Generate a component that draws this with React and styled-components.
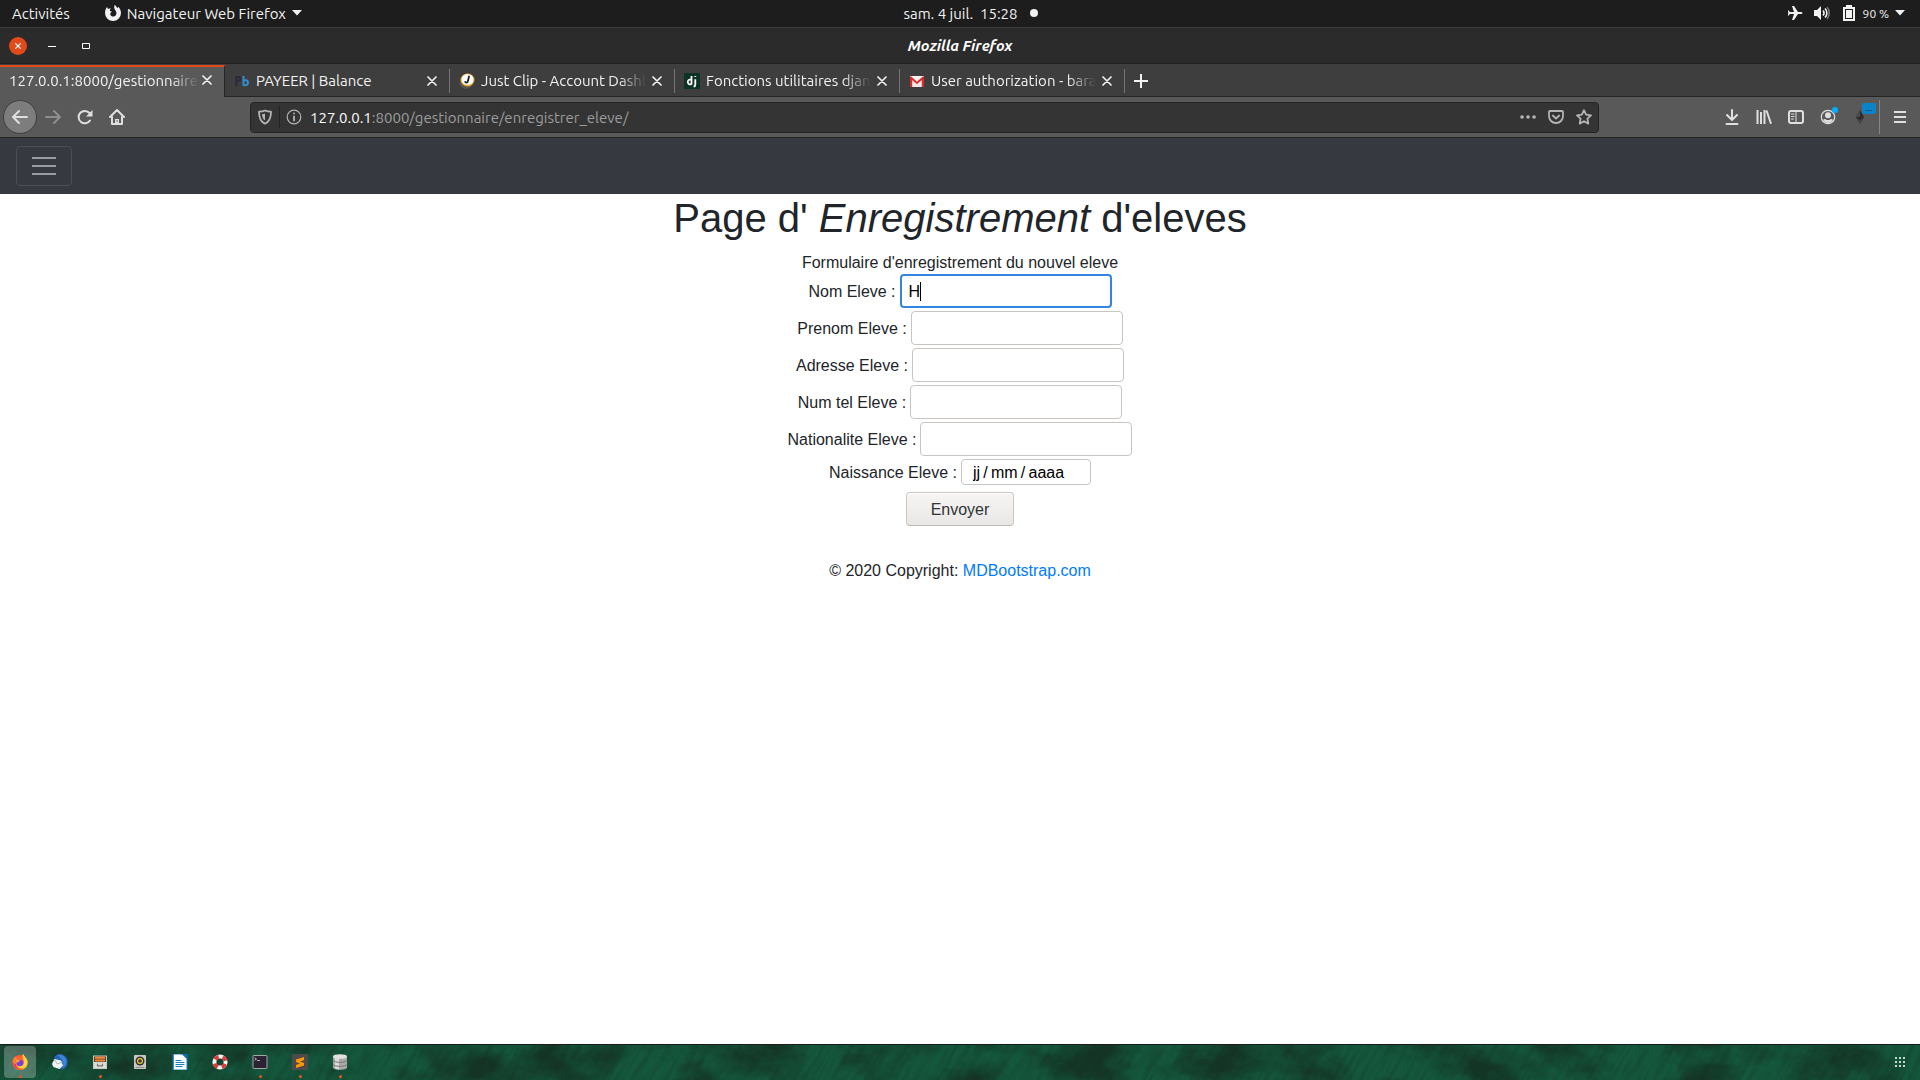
import React from "react";
import styled, { createGlobalStyle, css } from "styled-components";

const ui = `Ubuntu, "Noto Sans", "Open Sans", sans-serif`;
const sans = `"Liberation Sans", Arial, sans-serif`;

const GlobalStyle = createGlobalStyle`
  *, *::before, *::after { box-sizing: border-box; }
  body { margin: 0; background: #fff; }
  button, input { font: inherit; margin: 0; }
`;

const Desktop = styled.div`
  display: flex;
  flex-direction: column;
  height: 100vh;
  overflow: hidden;
  font-family: ${ui};
  font-size: 15px;
  color: #f2f2f2;
`;

const PlainButton = styled.button`
  display: flex;
  align-items: center;
  justify-content: center;
  gap: 6px;
  flex: none;
  padding: 0;
  border: 0;
  background: none;
  color: inherit;
  white-space: nowrap;
`;

/* ---- system bar ---- */
const SystemBar = styled.header`
  display: grid;
  grid-template-columns: 1fr auto 1fr;
  align-items: center;
  flex: none;
  height: 28px;
  padding: 0 15px 1px 12px;
  background: #1d1d1d;
  border-bottom: 1px solid #3c3c3c;
`;
const BarGroup = styled.div`
  display: flex;
  align-items: center;
  gap: ${(p) => p.$gap}px;
  justify-content: ${(p) => (p.$end ? "flex-end" : "flex-start")};
`;
const Clock = styled(BarGroup)`
  padding-left: 24px;
`;
const NotificationDot = styled.span`
  width: 8px;
  height: 8px;
  border-radius: 50%;
  background: #f2f2f2;
`;
const Battery = styled.span`
  font-size: 12px;
`;

/* ---- window title ---- */
const TitleBar = styled.div`
  display: grid;
  grid-template-columns: 1fr auto 1fr;
  align-items: center;
  flex: none;
  height: 36px;
  padding: 0 9px;
  background: #2b2b2b;
  border-bottom: 1px solid #202020;
`;
const WindowTitle = styled.h2`
  margin: 0;
  font-size: 15px;
  font-style: italic;
  font-weight: 700;
  color: #fff;
`;
const CloseWindow = styled(PlainButton)`
  width: 18px;
  height: 18px;
  border-radius: 50%;
  background: #e24a1a;
`;

/* ---- tabs ---- */
const TabStrip = styled.nav`
  display: flex;
  align-items: stretch;
  flex: none;
  height: 33px;
  background: #3e3e3e;
  box-shadow: inset 0 -1px #252525;
`;
const Tab = styled.div`
  display: flex;
  align-items: center;
  flex: 0 1 225px;
  min-width: 0;
  gap: 6px;
  padding: 0 13px 0 9px;
  position: relative;
  ${(p) =>
    p.$active
      ? css`
          gap: 3px;
          padding-right: 12px;
          padding-bottom: 4px;
          background: #595959;
          border-top: 2px solid #e24a1a;
          border-right: 1px solid #252525;
          margin-top: 1px;
        `
      : css`
          &::after {
            content: "";
            position: absolute;
            right: 0;
            top: 5px;
            width: 1px;
            height: 24px;
            background: #757575;
          }
        `}
`;
const TabTitle = styled.a`
  flex: 1;
  min-width: 0;
  overflow: hidden;
  white-space: nowrap;
  color: inherit;
  text-decoration: none;
  ${(p) => p.$fade && css`mask-image: linear-gradient(to left, transparent, #000 28px);`}
`;
const NewTab = styled(PlainButton)`
  width: 32px;
`;

/* ---- navigation toolbar ---- */
const Toolbar = styled.div`
  display: flex;
  align-items: center;
  flex: none;
  height: 41px;
  padding-left: 3px;
  background: #595959;
  border-bottom: 1px solid #252525;
  color: #dfdfdf;
`;
const ToolButton = styled(PlainButton)`
  width: 32px;
  height: 34px;
  position: relative;
  opacity: ${(p) => (p.disabled ? 0.4 : 1)};
`;
const BackButton = styled(ToolButton)`
  width: 34px;
  border: 1px solid #3f3f3f;
  border-radius: 50%;
  background: #7d7d7d;
`;
const Spacer = styled.div`
  flex: 1 1 0;
`;
const AddressBar = styled.div`
  display: flex;
  align-items: center;
  flex: 0 1 1349px;
  height: 31px;
  border: 1px solid #232323;
  border-radius: 4px;
  background: #343434;
  color: #b4b4b4;
`;
const AddressIcon = styled(PlainButton)`
  width: ${(p) => (p.$divided ? 29 : 28)}px;
  height: 22px;
  border-right: ${(p) => (p.$divided ? "1px solid #232323" : "0")};
`;
const Address = styled.a`
  flex: 1;
  padding-left: 2px;
  color: #9c9c9c;
  text-decoration: none;
`;
const Host = styled.span`
  color: #fff;
`;
const Badge = styled.span`
  position: absolute;
  left: 18px;
  top: 3px;
  width: 14px;
  height: 11px;
  border-radius: 2px;
  background: #0a84c8;
  color: #111;
  font-size: 10px;
  line-height: 9px;
`;
const MenuButton = styled(ToolButton)`
  width: 41px;
  margin-left: 3px;
  border-left: 1px solid #858585;
`;

/* ---- page ---- */
const Navbar = styled.nav`
  flex: none;
  padding: 8px 16px;
  background: #363940;
`;
const Toggler = styled(PlainButton)`
  width: 56px;
  height: 40px;
  border: 1px solid #4b4e55;
  border-radius: 4px;
  color: #9a9c9f;
`;
const Page = styled.main`
  flex: 1;
  min-height: 0;
  overflow: hidden;
  background: #fff;
  color: #212529;
  font-family: ${sans};
  font-size: 16px;
  line-height: 22px;
  text-align: center;
`;
const Heading = styled.h1`
  margin: 0 0 8px;
  font-size: 40px;
  line-height: 48px;
  font-weight: 400;
`;
const Form = styled.form`
  display: flex;
  flex-direction: column;
  align-items: center;
  gap: 3px;
`;
const Intro = styled.p`
  margin: 0;
  padding-top: 2px;
`;
const Field = styled.div`
  display: flex;
  align-items: center;
  gap: 4px;
`;
const Label = styled.label`
  padding-top: 2px;
`;
const TextBox = styled.input`
  width: 212px;
  height: 34px;
  padding: 2px 8px 0;
  border: 1px solid #c8c4c1;
  border-radius: 4px;
  outline: 0;
  background: #fff;
  color: #000;
  &::placeholder { color: #000; opacity: 1; }
  ${(p) =>
    p.$focused &&
    css`
      padding: 2px 7px 0;
      border: 2px solid #3584e4;
      caret-color: transparent;
      background: linear-gradient(#000, #000) 18px 50% / 1px 19px no-repeat #fff;
    `}
`;
const DateBox = styled(TextBox)`
  width: 130px;
  height: 26px;
  padding: 2px 11px 0;
`;
const Submit = styled.button`
  width: 108px;
  height: 34px;
  margin-top: 4px;
  padding: 2px 0 0;
  border: 1px solid #cdc7c2;
  border-bottom-color: #bfb8b1;
  border-radius: 4px;
  background: linear-gradient(#f6f5f4, #eae8e7);
  box-shadow: inset 0 1px #fff;
  color: #2e3436;
`;
const Footer = styled.footer`
  margin-top: 32px;
  padding-top: 2px;
`;
const FooterLink = styled.a`
  color: #007bff;
  text-decoration: none;
`;

/* ---- dock ---- */
const Dock = styled.footer`
  display: flex;
  align-items: stretch;
  flex: none;
  height: 36px;
  border-top: 1px solid #1c1a1c;
  position: relative;
  background: #14573d;
`;
const Texture = styled.svg`
  position: absolute;
  inset: 0;
  width: 100%;
  height: 100%;
`;
const DockItem = styled(PlainButton)`
  position: relative;
  width: 32px;
  margin: 1px 4px 2px;
  border-radius: 4px;
  background: ${(p) => (p.$active ? "rgba(255,255,255,0.25)" : "none")};
  &::after {
    content: "";
    display: ${(p) => (p.$running ? "block" : "none")};
    position: absolute;
    left: 15px;
    bottom: 0;
    width: 3px;
    height: 3px;
    border-radius: 50%;
    background: #e95420;
  }
`;

const Svg = ({ size = 16, children, ...rest }) => (
  <svg width={size} height={size} viewBox="0 0 16 16" fill="none" stroke="currentColor" strokeWidth="2" strokeLinecap="round" strokeLinejoin="round" aria-hidden="true" {...rest}>
    {children}
  </svg>
);
const Caret = () => (
  <svg width="10" height="6" viewBox="0 0 10 6" aria-hidden="true"><path d="M0 0h10L5 5.500z" fill="#f2f2f2" /></svg>
);
const Cross = () => (
  <Svg size={10} viewBox="0 0 10 10" strokeWidth="1.700"><path d="M1 1l8 8M9 1L1 9" /></Svg>
);

const favicons = {
  payeer: (
    <Svg stroke="none">
      <path d="M1.500 3h3a2.700 2.700 0 010 5.500H3.500V13h-2zM3.500 5v2h1a1 1 0 000-2z" fill="#29283d" />
      <path d="M8.500 3h2v3.500c3-1 4.500.6 4.500 3.200 0 3-3 4.200-6.500 3zM10.500 8.500v2.700c1.600.3 2.300-.3 2.300-1.500s-1-1.700-2.300-1.200z" fill="#2f8fcb" />
    </Svg>
  ),
  clip: (
    <Svg stroke="none">
      <ellipse cx="7" cy="10" rx="6.500" ry="6" fill="#555" />
      <ellipse cx="8.500" cy="7" rx="7" ry="6.500" fill="#f5a11c" />
      <ellipse cx="8.500" cy="6.500" rx="6" ry="5.500" fill="#fff" />
      <path d="M10 3.500L8.800 8.500c-.4 1.300-1.800 1.300-2.600.4" stroke="#222" strokeWidth="1.800" />
    </Svg>
  ),
  django: (
    <Svg stroke="none">
      <path d="M0 0h16v16H0z" fill="#0c3326" />
      <path d="M7.500 3v8.500M7.500 6.800C5 6 3.800 7.200 3.800 9s1.400 2.700 3.700 2.300M11.300 6.200v5.200c0 1.500-.5 2-1.700 2.300M11.300 3v1" stroke="#fff" strokeWidth="1.800" strokeLinecap="butt" />
    </Svg>
  ),
  gmail: (
    <Svg stroke="none">
      <path d="M1 3h14v11H1z" fill="#eceaea" />
      <path d="M1 3l7 7 7-7v3l-7 6-7-6z" fill="#e8ddd8" />
      <path d="M1 14V3.500h1.200L8 8.700l5.800-5.200H15V14h-2.200V7L8 11 3.200 7v7z" fill="#dc2b2b" />
      <path d="M3 3h10L8 7.600z" fill="#f6f4f4" />
    </Svg>
  ),
};

const tabs = [
  { title: "127.0.0.1:8000/gestionnaire", active: true, fade: true },
  { title: "PAYEER | Balance", icon: "payeer" },
  { title: "Just Clip - Account Dashb", icon: "clip", fade: true },
  { title: "Fonctions utilitaires djan", icon: "django", fade: true },
  { title: "User authorization - bara", icon: "gmail", fade: true },
];

const fields = [
  { id: "nom", label: "Nom Eleve :", value: "H", focused: true },
  { id: "prenom", label: "Prenom Eleve :" },
  { id: "adresse", label: "Adresse Eleve :" },
  { id: "tel", label: "Num tel Eleve :" },
  { id: "nationalite", label: "Nationalite Eleve :" },
];

const apps = [
  { name: "Firefox", active: true, running: true, art: (
    <>
      <circle cx="8" cy="8.500" r="7.500" fill="#ff5a36" />
      <path d="M1 5C0 11 3 16 8 16s8-4 7.500-9C15 4 12.500 3 11 0c-1 2-1 3-.5 4.500C8 4 5 6 3.500 2.500z" fill="#ff7b2e" />
      <path d="M11 0c-1 3 1 5 1 8 0 4-5 5-7 3 2 5 10 5 10.500-2C16 5 12.500 3 11 0z" fill="#ffd43a" />
      <path d="M1 9c1 4 4 7 8 6.500-4-.5-5-3-5-5z" fill="#f0315f" />
      <circle cx="8" cy="8.800" r="3.400" fill="#7b3fe0" />
      <path d="M3.500 5.500c2-.5 3 .8 5 1-1 1.500-2.500 1-3.500 2.500z" fill="#ffa52b" />
    </>) },
  { name: "Thunderbird", art: (
    <>
      <path d="M3 2C7-1 14 0 15.500 6S12 16 8 15 0 6 3 2z" fill="#2464b8" />
      <path d="M5 1c5-1 8 1 9 5s-1 7-4 8c3-5 1-9-5-13z" fill="#3d87d6" />
      <path d="M0 10l2.500-5L9 6.500l2 5L7.500 15l-6-2z" fill="#f0f2f4" />
      <path d="M2.500 6l3 4L10 8" stroke="#a9b4c0" strokeWidth="1" />
    </>) },
  { name: "Fichiers", running: true, art: (
    <>
      <path d="M1 1.500h14V15H1z" fill="#c9c7c3" />
      <path d="M2 2.500h12V8H2z" fill="#5c3a26" />
      <path d="M3 2.800h10v2H3zM3 5.500h10v2H3z" fill="#f08a35" />
      <path d="M2 8.500h12V14H2z" fill="#dedcd8" />
      <path d="M5.500 10v1.800h5V10" stroke="#77736f" strokeWidth="1.200" />
    </>) },
  { name: "Rhythmbox", art: (
    <>
      <rect x="2" y="1" width="12" height="14" rx="1" fill="#cac8c0" />
      <circle cx="8" cy="7" r="4.500" fill="#343434" />
      <circle cx="8" cy="7" r="2.400" stroke="#e5cb3a" strokeWidth="1.200" />
      <path d="M4 13.500h8" stroke="#8e8c86" strokeWidth="1" />
    </>) },
  { name: "LibreOffice Writer", art: (
    <>
      <path d="M1.500 0h9L15 4.500V16H1.500z" fill="#fff" stroke="#0f7fc4" strokeWidth="1" />
      <path d="M10 0h5.500v5.500z" fill="#0c6fae" />
      <path d="M4 6.500h5M4 8.500h8M4 10.500h8M4 12.500h6" stroke="#1480c4" strokeWidth="1.200" />
    </>) },
  { name: "Aide", art: (
    <>
      <circle cx="8" cy="8" r="5.600" stroke="#f4f4f4" strokeWidth="4" />
      <circle cx="8" cy="8" r="5.600" stroke="#dc3b3b" strokeWidth="4" strokeLinecap="butt" strokeDasharray="4.400 4.400" strokeDashoffset="-2.200" />
    </>) },
  { name: "Terminal", running: true, art: (
    <>
      <rect x="1" y="1.500" width="14" height="13" rx="1" fill="#2b2334" stroke="#a6a5a5" strokeWidth="1" />
      <path d="M3 4l1.500 1L3 6M5.500 6.500h2" stroke="#ddd" strokeWidth=".8" />
    </>) },
  { name: "Sublime Text", running: true, art: (
    <>
      <path d="M0 0h16v16H0z" fill="#4b4b4b" />
      <path d="M4 5.500L12 3v3L8 7.500l4 1.500v2.500L4 14v-3l4-1.500L4 8z" fill="#ff9800" />
    </>) },
  { name: "Base de données", running: true, art: (
    <>
      <path d="M1 2.500v11C1 16.500 15 16.500 15 13.500v-11z" fill="#aaa" />
      <path d="M3 3v11.500c1.500.7 3 .9 4 .9V3z" fill="#d9d9d9" />
      <ellipse cx="8" cy="2.500" rx="7" ry="2.300" fill="#e2e2e2" />
      <path d="M1 6.500c0 2.600 14 2.600 14 0M1 10.500c0 2.600 14 2.600 14 0" stroke="#777" strokeWidth="1" />
    </>) },
];

export default function App() {
  return (
    <Desktop>
      <GlobalStyle />
      <SystemBar>
        <BarGroup $gap={35}>
          <PlainButton>Activités</PlainButton>
          <PlainButton>
            <svg width="16" height="16" viewBox="0 0 16 16" aria-hidden="true">
              <path d="M9.500 0c2 1 2.300 2.500 2.500 3l1.500-1C15 3.500 16 5.500 16 8A8 8 0 010 8c0-2.500.8-4.500 2-6l1 2 3-1C5 4 4.700 5 5 6l2 .8C6 7.500 5 8 5.300 9.500 6 11.500 8 12 9.500 11.300 11.500 10.500 12 8 10.800 6 10 4.800 8.500 3 9.500 0z" fill="#f2f2f2" />
            </svg>
            Navigateur Web Firefox
            <Caret />
          </PlainButton>
        </BarGroup>
        <Clock $gap={12}>
          <PlainButton>sam. 4 juil.&nbsp; 15:28</PlainButton>
          <NotificationDot />
        </Clock>
        <BarGroup $gap={11} $end>
          <svg width="16" height="16" viewBox="0 0 16 16" aria-label="Mode avion">
            <path d="M1 5l2 2h4L5 1h2l4 6h3c2 0 2 2 0 2h-3l-4 6H5l2-6H3l-2 2V9l.5-1L1 7z" fill="#f2f2f2" />
          </svg>
          <svg width="16" height="16" viewBox="0 0 16 16" aria-label="Volume">
            <path d="M0 5h3l4-4v14l-4-4H0z" fill="#f2f2f2" />
            <path d="M9 5.500c1.300 1.500 1.300 3.500 0 5M11 3.500c2.500 2.500 2.500 6.500 0 9" fill="none" stroke="#f2f2f2" strokeWidth="1.600" />
            <path d="M13 2c3 3.500 3 8.500 0 12" fill="none" stroke="#777" strokeWidth="1.500" />
          </svg>
          <PlainButton>
            <svg width="16" height="16" viewBox="0 0 16 16" aria-hidden="true">
              <path d="M5 0h6v2h3v14H2V2h3zM4 4v10h8V4z" fill="#f2f2f2" fillRule="evenodd" />
              <path d="M5 5h6v8H5z" fill="#f2f2f2" />
            </svg>
            <Battery>90 %</Battery>
            <Caret />
          </PlainButton>
        </BarGroup>
      </SystemBar>

      <TitleBar>
        <BarGroup $gap={21}>
          <CloseWindow aria-label="Fermer">
            <Svg size={6} viewBox="0 0 6 6" strokeWidth="1.200" stroke="#fff"><path d="M.6.6l4.800 4.800M5.400.6L.6 5.400" /></Svg>
          </CloseWindow>
          <PlainButton aria-label="Réduire">
            <svg width="8" height="8" viewBox="0 0 8 8"><path d="M0 4h8v1H0z" fill="#fff" /></svg>
          </PlainButton>
          <PlainButton aria-label="Agrandir">
            <svg width="16" height="8" viewBox="0 0 16 8"><path d="M5.500 1.500h7v5h-7z" fill="none" stroke="#fff" /></svg>
          </PlainButton>
        </BarGroup>
        <WindowTitle>Mozilla Firefox</WindowTitle>
      </TitleBar>

      <TabStrip>
        {tabs.map((t) => (
          <Tab key={t.title} $active={t.active}>
            {favicons[t.icon]}
            <TabTitle href="#" $fade={t.fade}>{t.title}</TabTitle>
            <PlainButton aria-label="Fermer l'onglet"><Cross /></PlainButton>
          </Tab>
        ))}
        <NewTab aria-label="Nouvel onglet">
          <Svg size={14} viewBox="0 0 14 14" strokeWidth="2" strokeLinecap="butt"><path d="M7 0v14M0 7h14" /></Svg>
        </NewTab>
      </TabStrip>

      <Toolbar>
        <BackButton aria-label="Précédent"><Svg><path d="M15 8H1.500M7 2L1 8l6 6" /></Svg></BackButton>
        <ToolButton aria-label="Suivant" disabled><Svg><path d="M1 8h13.500M9 2l6 6-6 6" /></Svg></ToolButton>
        <ToolButton aria-label="Actualiser">
          <Svg><path d="M13 11.500A6.200 6.200 0 1112.500 4" /><path d="M15.500 1v6.500H9z" fill="currentColor" stroke="none" /></Svg>
        </ToolButton>
        <ToolButton aria-label="Accueil">
          <Svg><path d="M1 8l7-7 7 7M3 8v7h10V8" /><path d="M6 15v-5h4v5z" fill="currentColor" stroke="none" /><path d="M8 12h.1" stroke="#595959" strokeWidth="1.500" /></Svg>
        </ToolButton>
        <Spacer />
        <AddressBar>
          <AddressIcon $divided aria-label="Protection">
            <Svg strokeWidth="1.800"><path d="M8 1.500c2 1 4 1.200 6 1.200 0 6-1.500 10-6 12-4.500-2-6-6-6-12 2 0 4-.2 6-1.200z" /><path d="M8 4.500c-1 .4-2 .6-3 .7.200 3 1 5 3 6.300z" fill="currentColor" stroke="none" /></Svg>
          </AddressIcon>
          <AddressIcon aria-label="Informations du site">
            <Svg strokeWidth="1.200"><circle cx="8" cy="8" r="6.800" /><path d="M8 7.500v4M8 4.500v.1" strokeWidth="1.800" /></Svg>
          </AddressIcon>
          <Address href="#"><Host>127.0.0.1</Host>:8000/gestionnaire/enregistrer_eleve/</Address>
          <AddressIcon aria-label="Actions">
            <Svg><path d="M2 8h.1M8 8h.1M14 8h.1" strokeWidth="3.600" /></Svg>
          </AddressIcon>
          <AddressIcon aria-label="Pocket">
            <Svg strokeWidth="1.800"><path d="M2 2h12c.6 0 1 .4 1 1v4c0 4-3 7-7 7s-7-3-7-7V3c0-.6.400-1 1-1zM4.800 6.500L8 9.500l3.200-3" /></Svg>
          </AddressIcon>
          <AddressIcon aria-label="Marque-page">
            <Svg strokeWidth="1.800"><path d="M8 1.200l2.100 4.500 4.900.6-3.600 3.400.9 4.900L8 12.200l-4.300 2.400.9-4.900L1 6.300l4.900-.6z" /></Svg>
          </AddressIcon>
        </AddressBar>
        <Spacer />
        <ToolButton aria-label="Téléchargements"><Svg><path d="M8 1v9M3 6l5 5 5-5M2.500 15h11" /></Svg></ToolButton>
        <ToolButton aria-label="Bibliothèque"><Svg strokeLinecap="butt"><path d="M1.500 1v14M5 3v12M8.500 1v14M10.500 1.500l4.500 13.300" /></Svg></ToolButton>
        <ToolButton aria-label="Panneaux">
          <Svg><rect x="1" y="2" width="14" height="12" rx="2" /><path d="M8 2v12" strokeWidth="1" /><path d="M3.500 5h2.500M3.500 7.500h2.500M3.500 10h2" strokeWidth="1" /></Svg>
        </ToolButton>
        <ToolButton aria-label="Compte">
          <Svg size={20} viewBox="-2 -2 20 20">
            <circle cx="8" cy="8" r="6.700" strokeWidth="1.200" />
            <circle cx="8" cy="6.300" r="3" fill="currentColor" stroke="none" />
            <path d="M3 11c1.500-1.500 2.500-1 3.500 0h3c1-1 2-1.500 3.500 0-2.500 4-7.500 4-10 0z" fill="currentColor" stroke="none" />
            <circle cx="15" cy="1" r="3" fill="#00adff" stroke="none" />
          </Svg>
        </ToolButton>
        <ToolButton aria-label="Extension">
          <Svg stroke="none"><path d="M8 1l4 7-4 6.500L4 8z" fill="#2b2b2b" /><path d="M8 1v7L4 8z" fill="#4a4a4a" /><path d="M4 9l4 2 4-2-4 5.500z" fill="#444" /></Svg>
          <Badge>...</Badge>
        </ToolButton>
        <MenuButton aria-label="Menu"><Svg strokeLinecap="butt"><path d="M2 3h12M2 8h12M2 13h12" /></Svg></MenuButton>
      </Toolbar>

      <Navbar>
        <Toggler aria-label="Navigation">
          <svg width="24" height="18" viewBox="0 0 24 18"><path d="M0 1h24M0 9h24M0 17h24" stroke="currentColor" strokeWidth="2" /></svg>
        </Toggler>
      </Navbar>

      <Page>
        <Heading>Page d' <em>Enregistrement</em> d'eleves</Heading>
        <Intro>Formulaire d'enregistrement du nouvel eleve</Intro>
        <Form>
          {fields.map((f) => (
            <Field key={f.id}>
              <Label htmlFor={f.id}>{f.label}</Label>
              <TextBox id={f.id} type="text" defaultValue={f.value} $focused={f.focused} />
            </Field>
          ))}
          <Field>
            <Label htmlFor="naissance">Naissance Eleve :</Label>
            <DateBox id="naissance" type="text" placeholder={"jj\u2009/\u2009mm\u2009/\u2009aaaa"} />
          </Field>
          <Submit type="button">Envoyer</Submit>
        </Form>
        <Footer>© 2020 Copyright: <FooterLink href="#">MDBootstrap.com</FooterLink></Footer>
      </Page>

      <Dock>
        <Texture aria-hidden="true">
          <filter id="shade" x="0" y="0" width="100%" height="100%" colorInterpolationFilters="sRGB">
            <feTurbulence type="fractalNoise" baseFrequency="0.015 0.025" numOctaves="5" seed="7" />
            <feColorMatrix values="0 0 0 0 0.08  0 0 0 0 0.16  0 0 0 0 0.12  3 0 0 0 -1.250" />
          </filter>
          <filter id="strands" x="0" y="0" width="100%" height="100%" colorInterpolationFilters="sRGB">
            <feTurbulence type="fractalNoise" baseFrequency="0.18 0.03" numOctaves="3" seed="3" />
            <feColorMatrix values="0 0 0 0 0.08  0 0 0 0 0.18  0 0 0 0 0.13  2 0 0 0 -0.800" />
          </filter>
          <rect width="100%" height="100%" filter="url(#shade)" opacity="0.7" />
          <rect x="-2%" width="106%" height="100%" filter="url(#strands)" transform="skewX(-30)" opacity="0.35" />
        </Texture>
        {apps.map((a) => (
          <DockItem key={a.name} aria-label={a.name} $active={a.active} $running={a.running}>
            <Svg stroke="none">{a.art}</Svg>
          </DockItem>
        ))}
        <Spacer />
        <DockItem aria-label="Applications">
          <svg width="10" height="10" viewBox="0 0 10 10">
            <path d="M0 0h2v2H0zM4 0h2v2H4zM8 0h2v2H8zM0 4h2v2H0zM4 4h2v2H4zM8 4h2v2H8zM0 8h2v2H0zM4 8h2v2H4zM8 8h2v2H8z" fill="#c8d4cf" />
          </svg>
        </DockItem>
      </Dock>
    </Desktop>
  );
}
